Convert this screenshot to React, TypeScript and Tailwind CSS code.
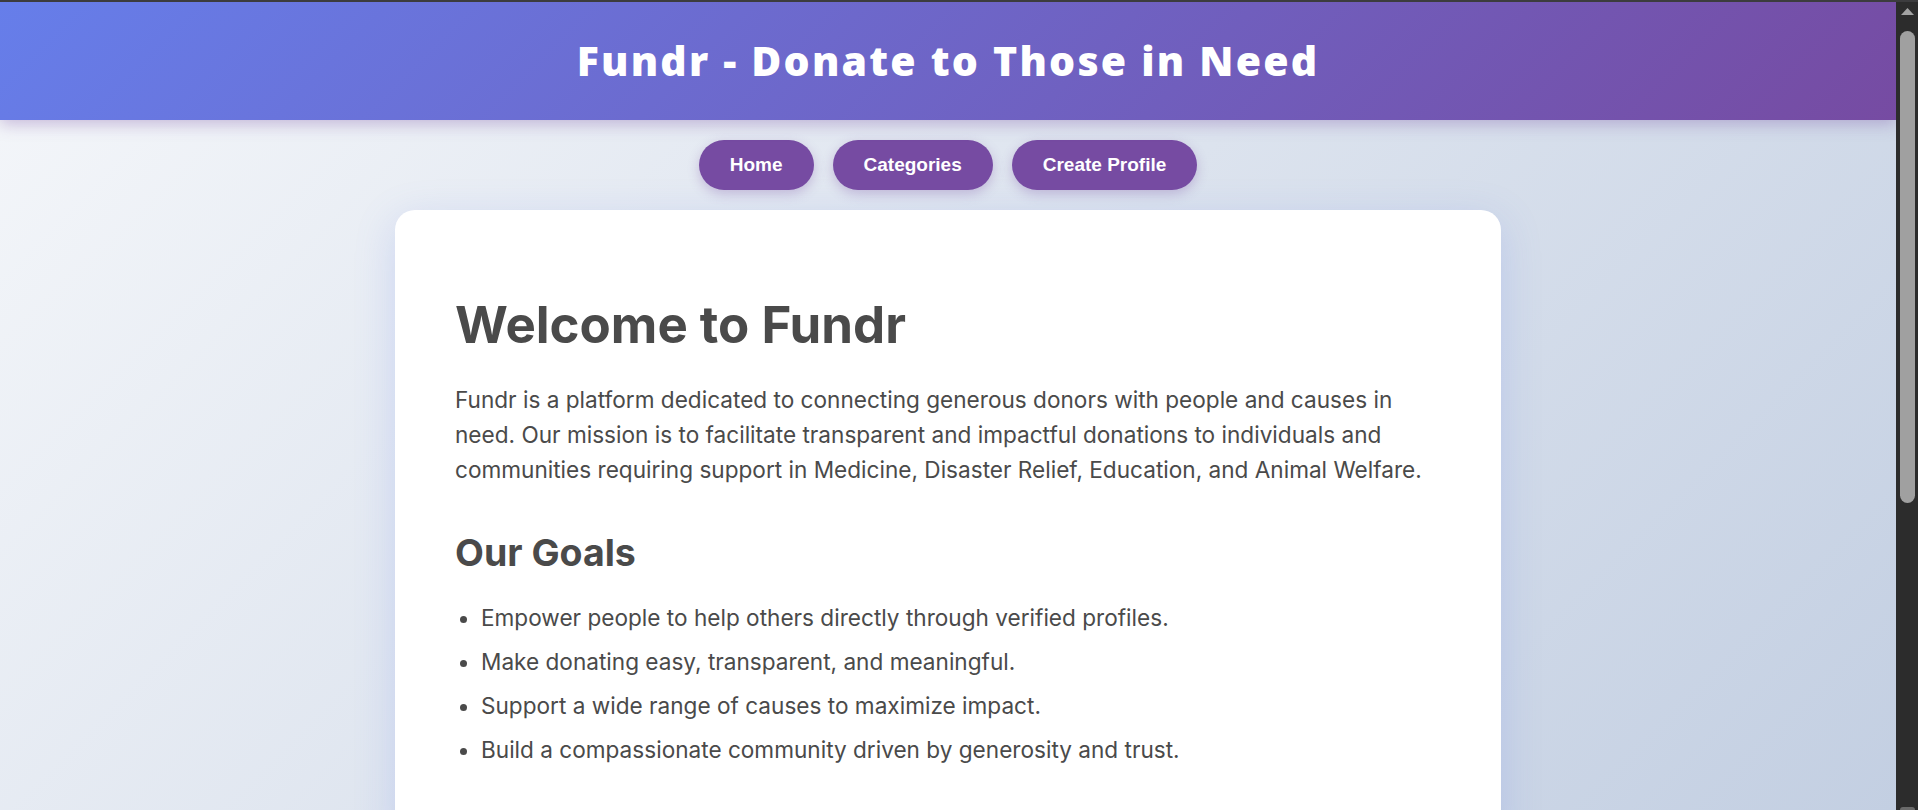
const goals = [
  "Empower people to help others directly through verified profiles.",
  "Make donating easy, transparent, and meaningful.",
  "Support a wide range of causes to maximize impact.",
  "Build a compassionate community driven by generosity and trust.",
];

const navItems = ["Home", "Categories", "Create Profile"];

function FakeScrollbar() {
  return (
    <div className="w-[22px] shrink-0 bg-[#2c2c2c] flex flex-col items-center">
      <svg width="15" height="9" viewBox="0 0 15 9" className="mt-[5px]">
        <path d="M7.5 1 L14 8 L1 8 Z" fill="#a3a3a3" />
      </svg>
      <div className="mt-[15px] w-[15px] h-[472px] rounded-full bg-[#a0a0a0]" />
      <div className="mt-auto w-[15px] h-[3px] rounded-t-sm bg-[#6a6a6a]" />
    </div>
  );
}

export default function App() {
  return (
    <div className="h-screen flex flex-col overflow-hidden bg-[#3c3c3e]">
      <div className="h-[2px] shrink-0" />
      <div className="flex flex-1 min-h-0">
        <main className="flex-1 min-w-0 overflow-hidden bg-[linear-gradient(135deg,#f5f7fa_0%,#c3cfe2_100%)]">
          <header className="h-[118px] flex items-center justify-center bg-[linear-gradient(135deg,#667eea_0%,#764ba2_100%)] shadow-[0_4px_15px_rgba(118,75,162,0.35)] relative z-10">
            <h1 className="text-white font-extrabold text-[41px] tracking-[2.2px] font-['Open_Sans',sans-serif]">
              Fundr - Donate to Those in Need
            </h1>
          </header>

          <nav className="flex justify-center gap-[19px] mt-[20px]">
            {navItems.map((item) => (
              <button
                key={item}
                type="button"
                className="rounded-full bg-[#764ba2] text-white font-bold text-[19px] leading-[22px] px-[31px] py-[14px] font-['Liberation_Sans',Arial,sans-serif] shadow-[0_4px_12px_rgba(118,75,162,0.3)]"
              >
                {item}
              </button>
            ))}
          </nav>

          <section className="mx-auto mt-[20px] w-[1106px] rounded-[20px] bg-white px-[60px] pt-[84px] pb-[80px] text-[#4a4a4a] font-['Inter',sans-serif] shadow-[0_10px_40px_rgba(102,126,234,0.22)]">
            <h1 className="text-[51px] leading-[1.2] font-bold">Welcome to Fundr</h1>
            <p className="mt-[27px] text-[22.6px] leading-[35px]">
              Fundr is a platform dedicated to connecting generous donors with people and causes in
              <br />
              need. Our mission is to facilitate transparent and impactful donations to individuals and
              <br />
              communities requiring support in Medicine, Disaster Relief, Education, and Animal Welfare.
            </p>
            <h2 className="mt-[43px] text-[37.5px] leading-[1.2] font-bold">Our Goals</h2>
            <ul className="mt-[25px] pl-[26px] list-disc flex flex-col gap-[9px] text-[22.6px] leading-[35px]">
              {goals.map((g) => (
                <li key={g}>{g}</li>
              ))}
            </ul>
          </section>
        </main>
        <FakeScrollbar />
      </div>
    </div>
  );
}
